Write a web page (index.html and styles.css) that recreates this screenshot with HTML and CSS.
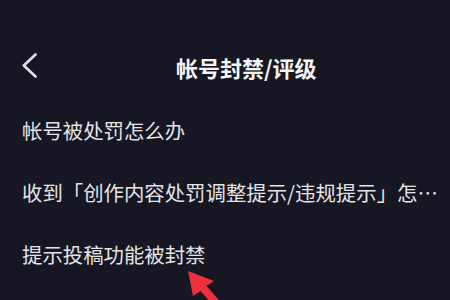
FILE: index.html
```html
<!DOCTYPE html>
<html lang="zh-CN">
<head>
<meta charset="utf-8">
<link rel="stylesheet" href="styles.css">
</head>
<body>
<div class="page">
  <header class="nav">
    <svg class="back" width="15" height="25" viewBox="0 0 15 25"><polyline points="13.5,1.5 1.8,12.5 13.5,23.5" fill="none" stroke="#e2e2e4" stroke-width="2.6" stroke-linecap="round" stroke-linejoin="round"/></svg>
    <h1 class="title">帐号封禁/评级</h1>
  </header>
  <ul class="list">
    <li class="item">帐号被处罚怎么办</li>
    <li class="item">收到「创作内容处罚调整提示/违规提示」怎…</li>
    <li class="item">提示投稿功能被封禁</li>
  </ul>
  <svg class="pointer" width="450" height="300" viewBox="0 0 450 300"><polygon points="188,271 214,281 206.5,285.9 226.3,308.4 220.3,313.6 200.5,291.1 193,296" fill="#ee2f3c"/></svg>
</div>
</body>
</html>
```
FILE: styles.css
```css
html, body {
  margin: 0;
  padding: 0;
  background: #161722;
}
.page {
  position: relative;
  width: 450px;
  height: 300px;
  overflow: hidden;
  background: #161722;
  font-family: "Noto Sans CJK SC", "Noto Sans", sans-serif;
  padding-top: 40px;
  box-sizing: border-box;
}
.nav {
  height: 54px;
  display: flex;
  align-items: center;
  padding-left: 22px;
}
.back {
  display: block;
  margin-top: -4px;
}
.title {
  margin: 0 0 0 139px;
  font-size: 22px;
  font-weight: 700;
  color: #f4f4f6;
  line-height: 1;
}
.list {
  list-style: none;
  margin: 0;
  padding: 5px 0 0 22px;
}
.item {
  height: 62px;
  line-height: 62px;
  font-size: 20.4px;
  color: #e4e4e7;
  white-space: nowrap;
}
.pointer {
  position: absolute;
  left: 0;
  top: 0;
}
```
